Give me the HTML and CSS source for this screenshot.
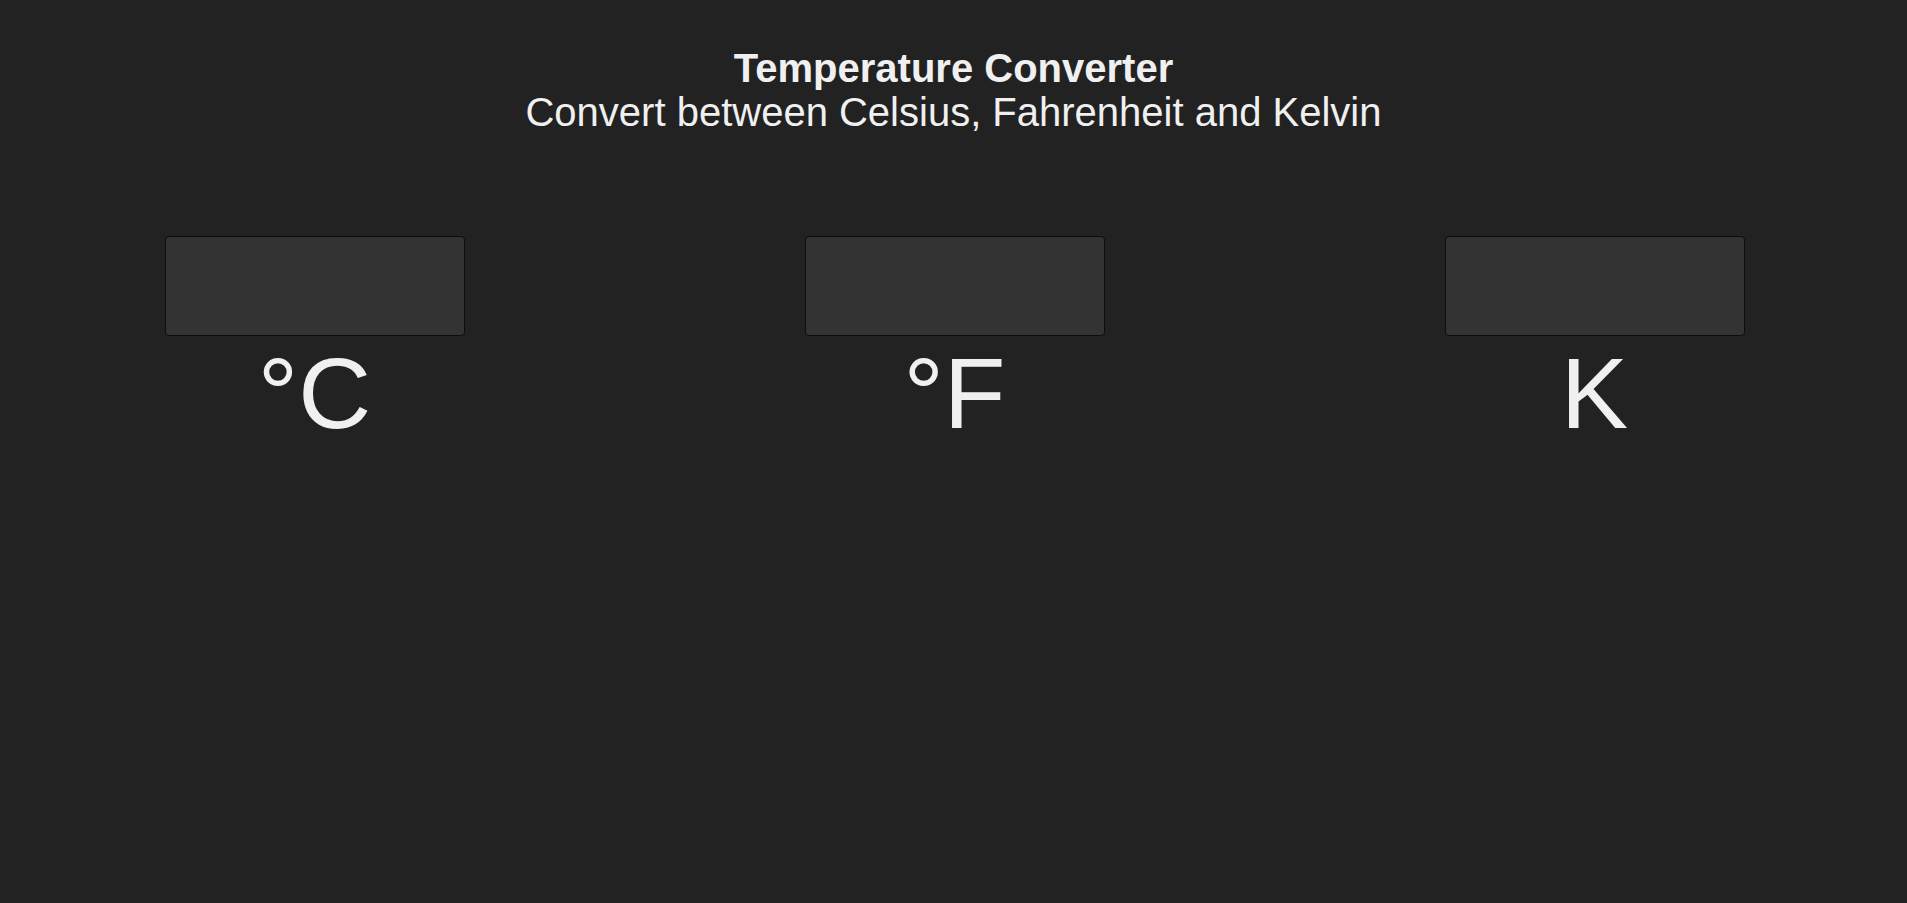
FILE: index.html
```html
<!DOCTYPE html>
<html lang="en">
<head>
<meta charset="utf-8">
<title>Temperature Converter</title>
<link rel="stylesheet" href="styles.css">
</head>
<body>
<header class="header">
  <h1 class="title">Temperature Converter</h1>
  <p class="subtitle">Convert between Celsius, Fahrenheit and Kelvin</p>
</header>
<main class="converters">
  <div class="unit">
    <input class="unit-input" type="text" aria-label="Celsius">
    <span class="unit-label">°C</span>
  </div>
  <div class="unit">
    <input class="unit-input" type="text" aria-label="Fahrenheit">
    <span class="unit-label">°F</span>
  </div>
  <div class="unit">
    <input class="unit-input" type="text" aria-label="Kelvin">
    <span class="unit-label">K</span>
  </div>
</main>
</body>
</html>
```
FILE: styles.css
```css
html, body {
  margin: 0;
  padding: 0;
}
body {
  background: #222222;
  color: #f0f0f0;
  font-family: "Liberation Sans", Arial, sans-serif;
  height: 903px;
}
.header {
  text-align: center;
  padding-top: 46px;
}
.title {
  margin: 0;
  font-size: 40px;
  font-weight: bold;
  line-height: 44px;
}
.subtitle {
  margin: 0;
  font-size: 40px;
  line-height: 44px;
}
.converters {
  display: flex;
  justify-content: center;
  gap: 340px;
  margin-top: 102px;
  padding-left: 2px;
}
.unit {
  display: flex;
  flex-direction: column;
  align-items: center;
  width: 300px;
}
.unit-input {
  box-sizing: border-box;
  width: 300px;
  height: 100px;
  margin: 0;
  background: #333333;
  border: 1px solid #0d0d0d;
  border-radius: 4px;
  color: #f0f0f0;
  font-size: 40px;
  padding: 0 10px;
  outline: none;
}
.unit-label {
  font-size: 101px;
  line-height: 114px;
}
```
